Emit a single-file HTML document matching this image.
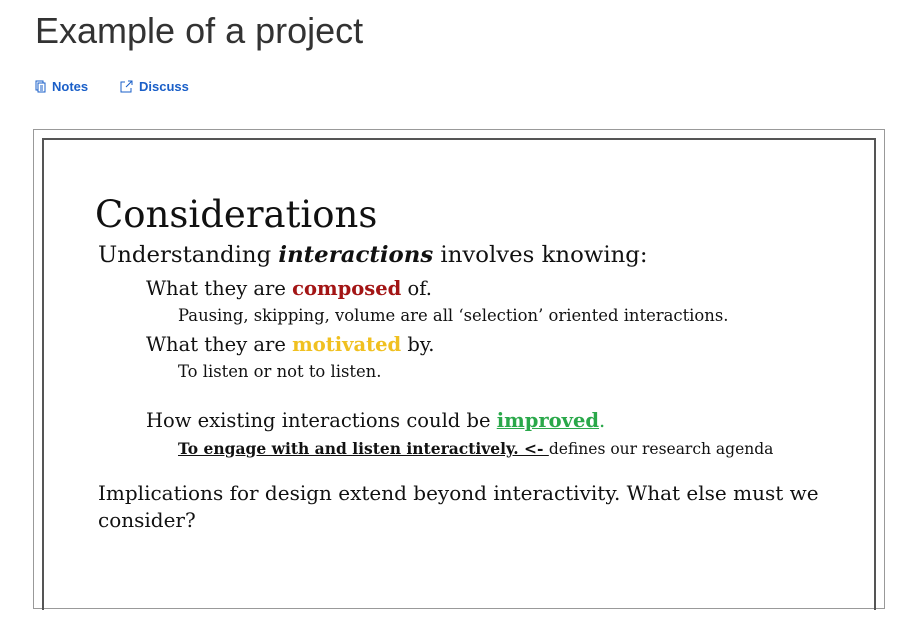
<!DOCTYPE html>
<html><head><style>
body{margin:0;width:922px;height:622px;background:#fff;position:relative;overflow:hidden;font-family:"Liberation Sans",sans-serif}
.t{position:absolute;left:35px;top:10px;font-size:36px;color:#333}
.lk{position:absolute;top:79px;font-size:13px;font-weight:bold;color:#1a5fc8}
.outer{position:absolute;left:33px;top:129px;width:850px;height:478px;border:1px solid #999}
.inner{position:absolute;left:42px;top:138px;width:830px;height:470px;border:2px solid #555;border-bottom:none}
.s{position:absolute;font-family:"DejaVu Serif",serif;color:#111;white-space:nowrap}
</style></head><body>
<div class="t">Example of a project</div>
<div class="lk" style="left:35px"><svg width="12" height="13" viewBox="0 0 12 13" style="vertical-align:-2px;margin-right:5px"><rect x="1" y="1" width="7" height="9" fill="none" stroke="#1a5fc8"/><rect x="3" y="3" width="7" height="9" fill="#fff" stroke="#1a5fc8"/><path d="M5 6h3M5 8h3M5 10h3" stroke="#1a5fc8"/></svg>Notes</div>
<div class="lk" style="left:120px"><svg width="13" height="13" viewBox="0 0 13 13" style="vertical-align:-2px;margin-right:6px"><path d="M5 2H1v10h10V8" fill="none" stroke="#1a5fc8"/><path d="M6 7l6-6M8 1h4v4" fill="none" stroke="#1a5fc8"/></svg>Discuss</div>
<div class="outer"></div>
<div class="inner"></div>
<div class="s" style="left:95px;top:193px;font-size:37px">Considerations</div>
<div class="s" style="left:98px;top:242px;font-size:22.8px">Understanding <b><i>interactions</i></b> involves knowing:</div>
<div class="s" style="left:146px;top:277px;font-size:19.5px">What they are <b style="color:#a31515">composed</b> of.</div>
<div class="s" style="left:178px;top:306px;font-size:16.4px">Pausing, skipping, volume are all ‘selection’ oriented interactions.</div>
<div class="s" style="left:146px;top:333px;font-size:19.5px">What they are <b style="color:#f0c020">motivated</b> by.</div>
<div class="s" style="left:178px;top:362px;font-size:16.4px">To listen or not to listen.</div>
<div class="s" style="left:146px;top:409px;font-size:19.5px">How existing interactions could be <b style="color:#2aa84a;text-decoration:underline">improved</b><span style="color:#2aa84a">.</span></div>
<div class="s" style="left:178px;top:439px;font-size:15.5px"><b style="text-decoration:underline">To engage with and listen interactively. &lt;- </b>defines our research agenda</div>
<div class="s" style="left:98px;top:480px;font-size:20px;line-height:27px">Implications for design extend beyond interactivity. What else must we<br>consider?</div>
</body></html>
